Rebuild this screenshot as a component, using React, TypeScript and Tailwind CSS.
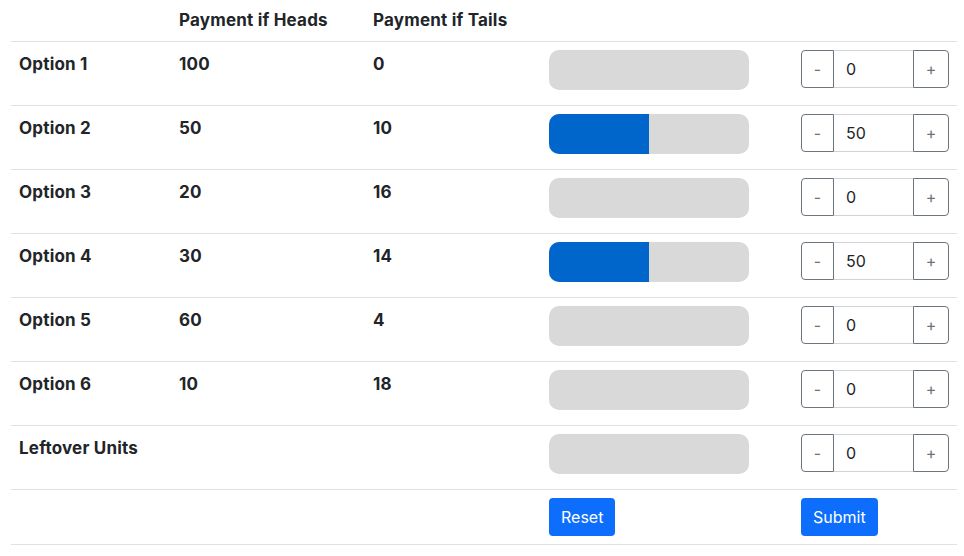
import { useState } from 'react';

type Option = { name: string; heads: number | null; tails: number | null };

const options: Option[] = [
  { name: 'Option 1', heads: 100, tails: 0 },
  { name: 'Option 2', heads: 50, tails: 10 },
  { name: 'Option 3', heads: 20, tails: 16 },
  { name: 'Option 4', heads: 30, tails: 14 },
  { name: 'Option 5', heads: 60, tails: 4 },
  { name: 'Option 6', heads: 10, tails: 18 },
  { name: 'Leftover Units', heads: null, tails: null },
];

const initial = [0, 50, 0, 50, 0, 0, 0];

function Stepper({ value, onChange }: { value: number; onChange: (v: number) => void }) {
  return (
    <div className="flex h-[38px] w-[148px]">
      <button
        onClick={() => onChange(Math.max(0, value - 1))}
        className="w-[33px] rounded-l-[4px] border border-[#6c757d] text-[16px] text-[#6c757d]"
      >
        -
      </button>
      <input
        value={value}
        onChange={(e) => onChange(Number(e.target.value) || 0)}
        className="w-[79px] border-y border-[#ced4da] pl-[12px] text-[16px] text-[#212529] outline-none"
      />
      <button
        onClick={() => onChange(Math.min(100, value + 1))}
        className="w-[36px] rounded-r-[4px] border border-[#6c757d] text-[16px] text-[#6c757d]"
      >
        +
      </button>
    </div>
  );
}

function Bar({ value }: { value: number }) {
  return (
    <div className="h-[40px] w-[200px] overflow-hidden rounded-[10px] bg-[#d9d9d9]">
      <div className="h-full bg-[#0066cc]" style={{ width: `${value}%` }} />
    </div>
  );
}

export default function App() {
  const [values, setValues] = useState<number[]>(initial);

  const setAt = (i: number, v: number) =>
    setValues((prev) => prev.map((x, j) => (j === i ? v : x)));

  const label = 'px-2 text-left text-[17px] font-bold tracking-[0.2px]';

  return (
    <div className="px-[11px] font-['Inter','Liberation_Sans',sans-serif] text-[16px] text-[#212529]">
      <table className="w-[946px] table-fixed border-collapse">
        <colgroup>
          <col className="w-[160px]" />
          <col className="w-[194px]" />
          <col className="w-[176px]" />
          <col className="w-[252px]" />
          <col className="w-[164px]" />
        </colgroup>
        <thead>
          <tr className="h-[41px] border-b border-[#dee2e6]">
            <th className={label}></th>
            <th className={label}>Payment if Heads</th>
            <th className={label}>Payment if Tails</th>
            <th className="px-2"></th>
            <th className="px-2"></th>
          </tr>
        </thead>
        <tbody>
          {options.map((o, i) => (
            <tr key={o.name} className="h-[64px] border-b border-[#dee2e6] align-top">
              <td className={`${label} pt-[10px]`}>{o.name}</td>
              <td className={`${label} pt-[10px]`}>{o.heads ?? ''}</td>
              <td className={`${label} pt-[10px]`}>{o.tails ?? ''}</td>
              <td className="px-2 pt-[8px]">
                <Bar value={values[i]} />
              </td>
              <td className="px-2 pt-[8px]">
                <Stepper value={values[i]} onChange={(v) => setAt(i, v)} />
              </td>
            </tr>
          ))}
          <tr className="h-[55px] border-b border-[#dee2e6] align-top">
            <td className="px-2"></td>
            <td className="px-2"></td>
            <td className="px-2"></td>
            <td className="px-2 pt-[8px]">
              <button
                onClick={() => setValues(initial)}
                className="h-[38px] rounded-[4px] bg-[#0d6efd] px-[12px] text-[16px] text-white"
              >
                Reset
              </button>
            </td>
            <td className="px-2 pt-[8px]">
              <button className="h-[38px] rounded-[4px] bg-[#0d6efd] px-[12px] text-[16px] text-white">
                Submit
              </button>
            </td>
          </tr>
        </tbody>
      </table>
    </div>
  );
}
